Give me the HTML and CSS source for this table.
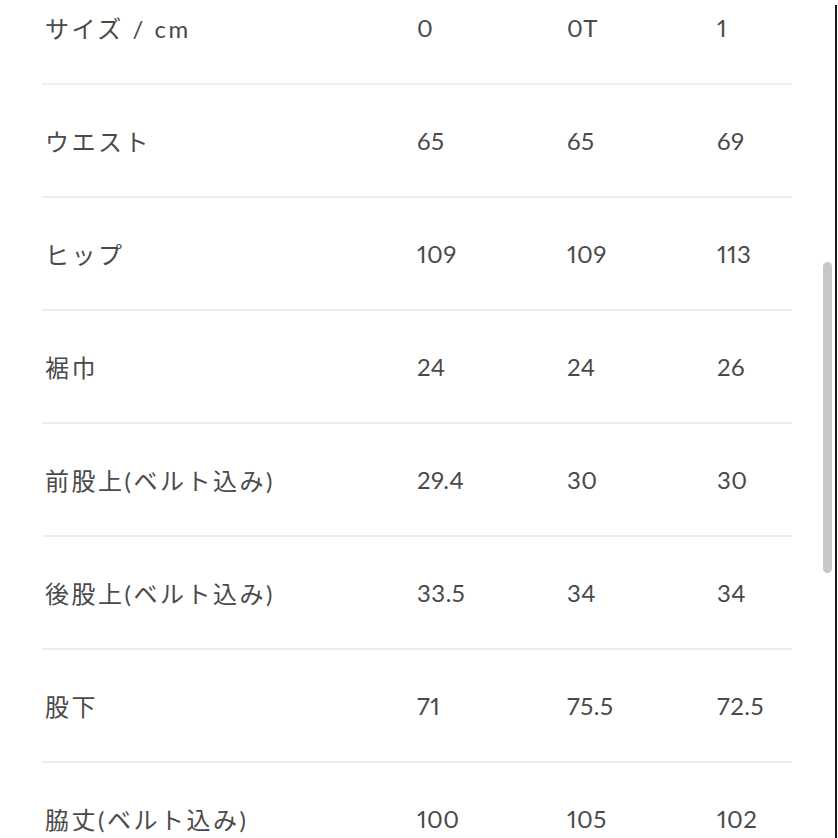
FILE: index.html
```html
<!DOCTYPE html>
<html lang="ja">
<head>
<meta charset="utf-8">
<link rel="stylesheet" href="styles.css">
</head>
<body>
<div class="page">
  <table class="size-table">
    <colgroup>
      <col class="c-label"><col class="c-val"><col class="c-val"><col class="c-last">
    </colgroup>
    <tr><th>サイズ / cm</th><td>0</td><td>0T</td><td>1</td></tr>
    <tr><th>ウエスト</th><td>65</td><td>65</td><td>69</td></tr>
    <tr><th>ヒップ</th><td>109</td><td>109</td><td>113</td></tr>
    <tr><th>裾巾</th><td>24</td><td>24</td><td>26</td></tr>
    <tr><th>前股上(ベルト込み)</th><td>29.4</td><td>30</td><td>30</td></tr>
    <tr><th>後股上(ベルト込み)</th><td>33.5</td><td>34</td><td>34</td></tr>
    <tr><th>股下</th><td>71</td><td>75.5</td><td>72.5</td></tr>
    <tr><th>脇丈(ベルト込み)</th><td>100</td><td>105</td><td>102</td></tr>
  </table>
  <div class="scrollbar"></div>
  <div class="edge"></div>
</div>
</body>
</html>
```
FILE: styles.css
```css
html, body {
  margin: 0;
  padding: 0;
  background: #fff;
}
.page {
  position: relative;
  width: 838px;
  height: 838px;
  overflow: hidden;
}
.size-table {
  margin: -28px 0 0 42px;
  width: 750px;
  border-collapse: collapse;
  table-layout: fixed;
  font-family: "Lato", "Noto Sans CJK JP", sans-serif;
  color: #4a4a4a;
}
.c-label { width: 375px; }
.c-val { width: 150px; }
.c-last { width: 75px; }
.size-table th,
.size-table td {
  height: 111px;
  padding: 0;
  vertical-align: middle;
  border-bottom: 2px solid #eeeeee;
  white-space: nowrap;
  text-align: left;
}
.size-table th {
  font-weight: normal;
  font-size: 24px;
  letter-spacing: 2.5px;
  padding-left: 3px;
}
.size-table td {
  font-size: 24px;
  letter-spacing: 0.5px;
  font-variant-numeric: proportional-nums;
  padding-left: 0;
}
.scrollbar {
  position: absolute;
  left: 823px;
  top: 262px;
  width: 9px;
  height: 311px;
  border-radius: 5px;
  background: #c8c8c8;
}
.edge {
  position: absolute;
  left: 835px;
  top: 5px;
  width: 2px;
  bottom: 0;
  background: #1a1a1a;
}
```
